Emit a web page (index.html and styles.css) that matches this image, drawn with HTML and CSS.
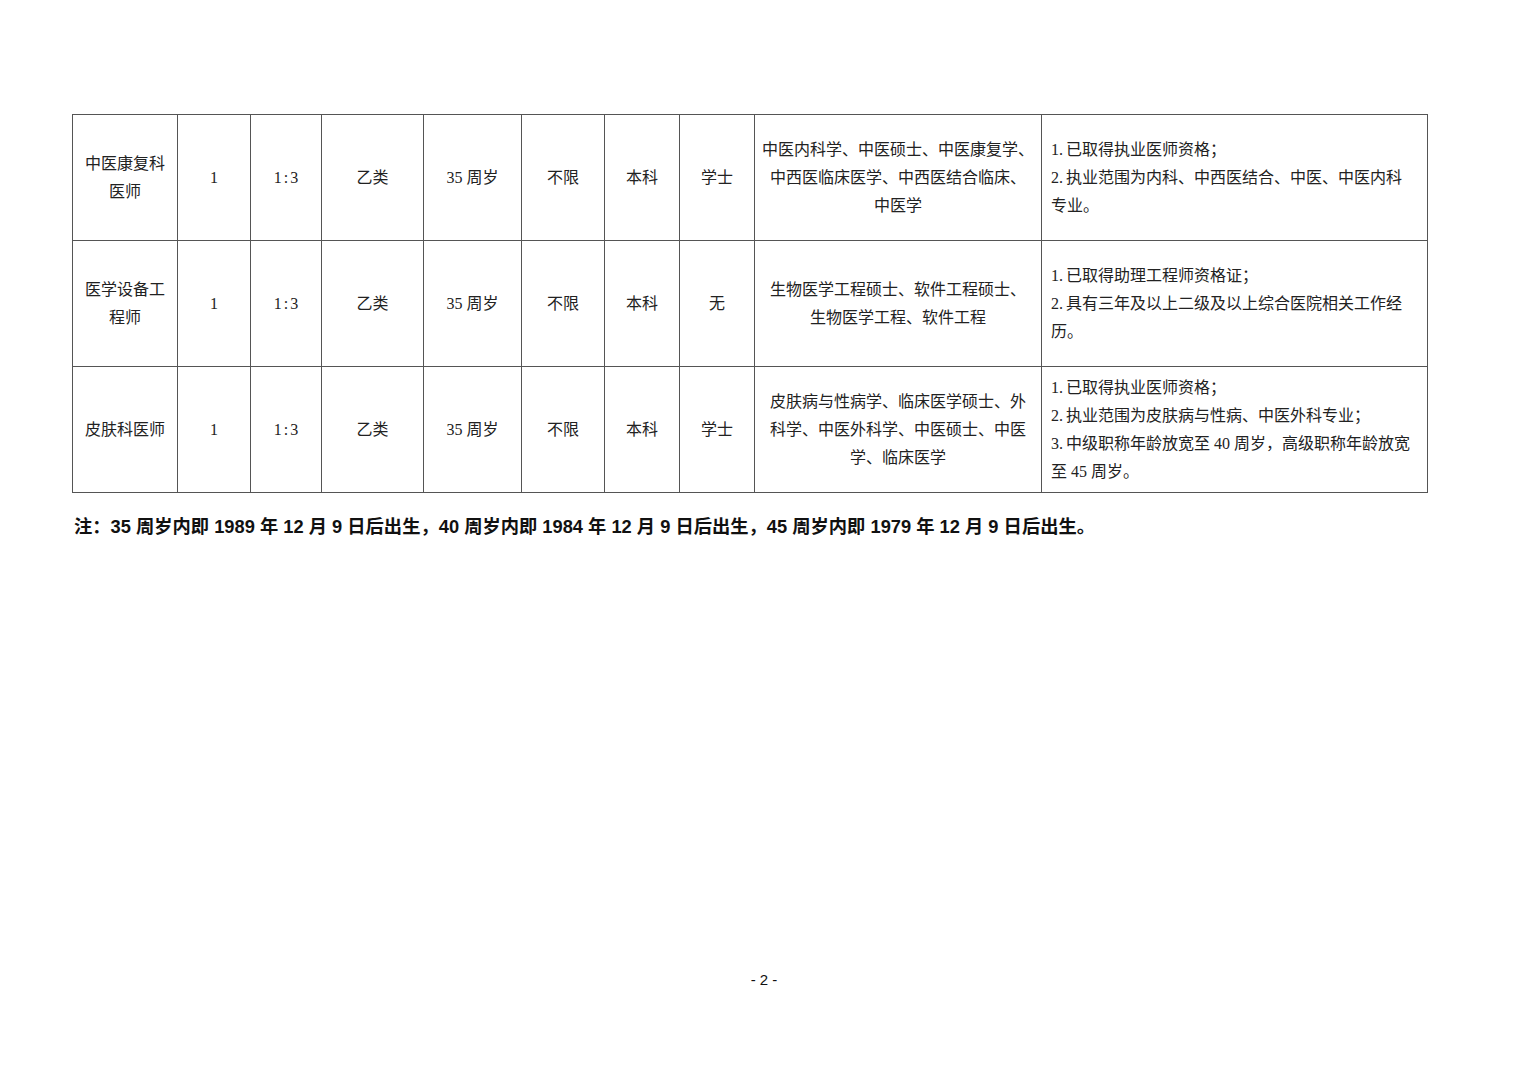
FILE: index.html
```html
<!DOCTYPE html>
<html lang="zh-CN">
<head>
<meta charset="utf-8">
<title>岗位表</title>
<link rel="stylesheet" href="styles.css">
</head>
<body>
<div class="page">
  <table class="jobs">
    <colgroup>
      <col class="c1"><col class="c2"><col class="c3"><col class="c4"><col class="c5">
      <col class="c6"><col class="c7"><col class="c8"><col class="c9"><col class="c10">
    </colgroup>
    <tr>
      <td>中医康复科<br>医师</td>
      <td>1</td>
      <td class="ratio">1:3</td>
      <td>乙类</td>
      <td>35 周岁</td>
      <td>不限</td>
      <td>本科</td>
      <td>学士</td>
      <td>中医内科学、中医硕士、中医康复学、<br>中西医临床医学、中西医结合临床、<br>中医学</td>
      <td class="req"><span class="n">1.</span>已取得执业医师资格；<br><span class="n">2.</span>执业范围为内科、中西医结合、中医、中医内科<br>专业。</td>
    </tr>
    <tr>
      <td>医学设备工<br>程师</td>
      <td>1</td>
      <td class="ratio">1:3</td>
      <td>乙类</td>
      <td>35 周岁</td>
      <td>不限</td>
      <td>本科</td>
      <td>无</td>
      <td>生物医学工程硕士、软件工程硕士、<br>生物医学工程、软件工程</td>
      <td class="req"><span class="n">1.</span>已取得助理工程师资格证；<br><span class="n">2.</span>具有三年及以上二级及以上综合医院相关工作经<br>历。</td>
    </tr>
    <tr>
      <td>皮肤科医师</td>
      <td>1</td>
      <td class="ratio">1:3</td>
      <td>乙类</td>
      <td>35 周岁</td>
      <td>不限</td>
      <td>本科</td>
      <td>学士</td>
      <td>皮肤病与性病学、临床医学硕士、外<br>科学、中医外科学、中医硕士、中医<br>学、临床医学</td>
      <td class="req"><span class="n">1.</span>已取得执业医师资格；<br><span class="n">2.</span>执业范围为皮肤病与性病、中医外科专业；<br><span class="n">3.</span>中级职称年龄放宽至 40 周岁，高级职称年龄放宽<br>至 45 周岁。</td>
    </tr>
  </table>
  <p class="note">注：35 周岁内即 1989 年 12 月 9 日后出生，40 周岁内即 1984 年 12 月 9 日后出生，45 周岁内即 1979 年 12 月 9 日后出生。</p>
  <div class="pagenum">- 2 -</div>
</div>
</body>
</html>
```

FILE: styles.css
```css
html, body {
  margin: 0;
  padding: 0;
  background: #ffffff;
}

.page {
  width: 1528px;
  height: 1080px;
  box-sizing: border-box;
  padding: 114px 0 0 72px;
  position: relative;
  color: #1a1a1a;
}

.jobs {
  border-collapse: collapse;
  table-layout: fixed;
  width: 1355px;
  font-family: "Liberation Serif", "Noto Sans CJK SC", serif;
  font-size: 16px;
  line-height: 28px;
  color: #222;
}

.c1 { width: 105px; }
.c2 { width: 73px; }
.c3 { width: 71px; }
.c4 { width: 102px; }
.c5 { width: 98px; }
.c6 { width: 83px; }
.c7 { width: 75px; }
.c8 { width: 75px; }
.c9 { width: 287px; }
.c10 { width: 386px; }

.jobs tr {
  height: 126px;
}

.jobs td {
  border: 1px solid #555;
  height: 126px;
  padding: 0 4px;
  text-align: center;
  vertical-align: middle;
  box-sizing: border-box;
  white-space: nowrap;
}

.jobs td.ratio {
  letter-spacing: 2px;
  padding-left: 6px;
}

.jobs td.req {
  text-align: left;
  padding-left: 9px;
}

.n {
  margin-right: 3px;
}

.note {
  margin: 22px 0 0 2px;
  font-family: "Liberation Sans", "Noto Sans CJK SC", sans-serif;
  font-weight: bold;
  font-size: 18.3px;
  line-height: 24px;
  color: #111;
  white-space: nowrap;
}

.pagenum {
  position: absolute;
  left: 0;
  right: 0;
  top: 970px;
  text-align: center;
  font-family: "Liberation Sans", "Noto Sans CJK SC", sans-serif;
  font-size: 15px;
  line-height: 20px;
  color: #111;
}
```
